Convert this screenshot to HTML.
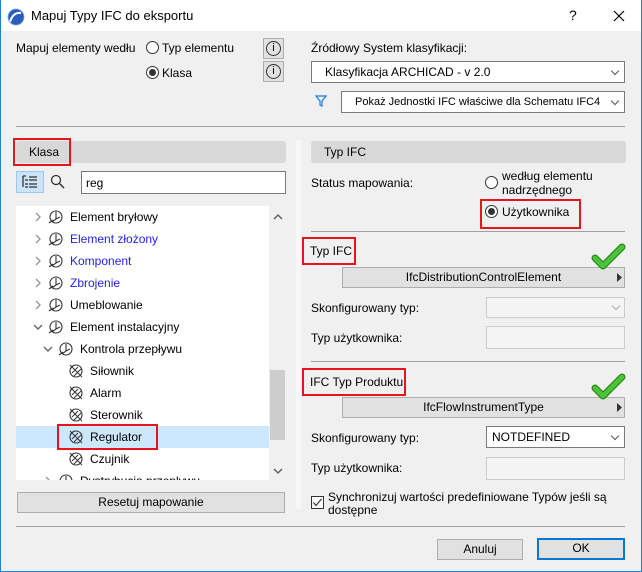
<!DOCTYPE html>
<html><head><meta charset="utf-8"><style>
*{box-sizing:border-box;margin:0;padding:0}
body{width:642px;height:572px;overflow:hidden;background:#f0f0f0;font-family:"Liberation Sans",sans-serif;font-size:12px;color:#000;position:relative}
.a{position:absolute;white-space:nowrap}
.t{position:absolute;white-space:nowrap;line-height:14px}
.win{position:absolute;left:0;top:0;width:642px;height:572px;border:1px solid #1883d7;border-top:none}
.title{position:absolute;left:0;top:0;width:642px;height:31px;background:#fff;border-left:1px solid #1883d7;border-right:1px solid #1883d7}
.radio{position:absolute;width:13px;height:13px;border:1px solid #333;border-radius:50%;background:#fff}
.radio.on::after{content:"";position:absolute;left:2px;top:2px;width:7px;height:7px;border-radius:50%;background:#333}
.info{position:absolute;width:21px;height:21px;border:1px solid #adadad;background:#e1e1e1}
.info::after{content:"";position:absolute;left:2px;top:2px;width:15px;height:15px;border:1.3px solid #333;border-radius:50%;box-sizing:border-box}
.info span{position:absolute;left:0;width:19px;top:3px;text-align:center;font-size:11px;line-height:13px}
.dd{position:absolute;background:#fff;border:1px solid #7a7a7a;height:22px}
.dd .v{position:absolute;right:6px;top:6px;width:6px;height:6px;border-right:1px solid #555;border-bottom:1px solid #555;transform:rotate(45deg)}
.line{position:absolute;height:1px;background:#a0a0a0}
.hdr{position:absolute;background:#d8d8d8;border-radius:3px;height:22px}
.red{position:absolute;border:2px solid #e8141c}
.btn{position:absolute;background:#e1e1e1;border:1px solid #adadad;text-align:center;line-height:19px}
.inp{position:absolute;background:#f4f4f4;border:1px solid #ccc}
.blue{color:#1f1ff0}
</style></head><body>
<div class="title"></div>
<div class="win"></div>
<svg class="a" style="left:7px;top:8px" width="18" height="18" viewBox="0 0 18 18"><circle cx="9" cy="9" r="8" fill="#2a5fb8"/><path d="M3 14 Q6 4 14 5" stroke="#fff" stroke-width="2" fill="none"/><circle cx="9" cy="9" r="8" fill="none" stroke="#7fa6e0" stroke-width="0.8"/></svg>
<div class="t" style="left:31px;top:9px;font-size:13px;color:#000">Mapuj Typy IFC do eksportu</div>
<div class="t" style="left:569px;top:8px;font-size:14px">?</div>
<svg class="a" style="left:613px;top:10px" width="12" height="12"><path d="M1 1L11 11M11 1L1 11" stroke="#000" stroke-width="1.2"/></svg>

<div class="t" style="left:16px;top:41px">Mapuj elementy według</div>
<div class="a" style="left:136px;top:38px;width:8px;height:20px;background:#f0f0f0"></div>
<div class="radio" style="left:146px;top:41px"></div>
<div class="t" style="left:162px;top:41px">Typ elementu</div>
<div class="radio on" style="left:146px;top:66px"></div>
<div class="t" style="left:162px;top:66px">Klasa</div>
<div class="info" style="left:263px;top:38px"><span>i</span></div>
<div class="info" style="left:263px;top:61px"><span>i</span></div>

<div class="t" style="left:311px;top:41px">Źródłowy System klasyfikacji:</div>
<div class="dd" style="left:311px;top:61px;width:314px"><div class="t" style="left:13px;top:3px">Klasyfikacja ARCHICAD - v 2.0</div><div class="v"></div></div>
<svg class="a" style="left:315px;top:95px" width="12" height="12"><path d="M1 1H11L7 6V11L5 10V6Z" fill="none" stroke="#1e7ae0" stroke-width="1.2"/></svg>
<div class="dd" style="left:341px;top:91px;width:284px"><div class="t" style="left:13px;top:3px;font-size:11px">Pokaż Jednostki IFC właściwe dla Schematu IFC4</div><div class="v"></div></div>
<div class="line" style="left:16px;top:126px;width:609px"></div>

<!-- left -->
<div class="hdr" style="left:16px;top:141px;width:270px"></div>
<div class="t" style="left:29px;top:145px">Klasa</div>
<div class="red" style="left:13px;top:138px;width:58px;height:28px"></div>
<div class="a" style="left:16px;top:171px;width:28px;height:22px;background:#cce4f7;border:1px solid #99c9ef"></div>
<svg class="a" style="left:22px;top:175px" width="16" height="14"><path d="M1 1h3M1 1v11M3 5h3M3 9h3M3 12h3M7 2h8M7 5h8M7 9h8M7 12h8" stroke="#333" stroke-width="1.3" fill="none"/></svg>
<svg class="a" style="left:50px;top:174px" width="16" height="16"><circle cx="6" cy="6" r="4.5" fill="none" stroke="#333" stroke-width="1.3"/><path d="M9.5 9.5L14 14" stroke="#333" stroke-width="1.5"/></svg>
<div class="a" style="left:81px;top:171px;width:205px;height:23px;background:#fff;border:1px solid #7a7a7a"></div>
<div class="t" style="left:86px;top:176px">reg</div>

<div class="a" style="left:16px;top:206px;width:270px;height:274px;background:#fff;overflow:hidden">
<div class="a" style="left:253px;top:0;width:17px;height:274px;background:#f0f0f0"></div>
<div class="a" style="left:254px;top:164px;width:15px;height:70px;background:#cdcdcd"></div>
<svg class="a" style="left:257px;top:7px" width="10" height="7"><path d="M1 6L5 2L9 6" stroke="#555" fill="none" stroke-width="1.3"/></svg>
<svg class="a" style="left:257px;top:262px" width="10" height="7"><path d="M1 1L5 5L9 1" stroke="#555" fill="none" stroke-width="1.3"/></svg>
<div class="a" style="left:0;top:220px;width:253px;height:22px;background:#cce8ff"></div>
</div>
<svg class="a" style="left:16px;top:206px;overflow:hidden" width="253" height="274">
<defs>
<g id="ic1"><circle cx="7" cy="7" r="6" fill="none" stroke="#333" stroke-width="1.1"/><path d="M7 2V9L3 12M7 9L11 7M0 13L4 10" stroke="#333" stroke-width="1.1" fill="none"/></g>
<g id="ic2"><circle cx="7" cy="7" r="6" fill="none" stroke="#333" stroke-width="1.1"/><path d="M1 1L13 13M3 9L9 3M5 12L12 5M1 5L5 1" stroke="#333" stroke-width="1" fill="none"/></g>
<path id="cr" d="M0 0L4 4L0 8" stroke="#999" stroke-width="1.4" fill="none"/>
<path id="cd" d="M0 0L4 4L8 0" stroke="#666" stroke-width="1.4" fill="none"/>
</defs>
<use href="#cr" x="20" y="7"/><use href="#ic1" x="33" y="4"/>
<use href="#cr" x="20" y="29"/><use href="#ic1" x="33" y="26"/>
<use href="#cr" x="20" y="51"/><use href="#ic1" x="33" y="48"/>
<use href="#cr" x="20" y="73"/><use href="#ic1" x="33" y="70"/>
<use href="#cr" x="20" y="95"/><use href="#ic1" x="33" y="92"/>
<use href="#cd" x="18" y="119"/><use href="#ic1" x="33" y="114"/>
<use href="#cd" x="28" y="141"/><use href="#ic1" x="43" y="136"/>
<use href="#ic2" x="53" y="158"/>
<use href="#ic2" x="53" y="180"/>
<use href="#ic2" x="53" y="202"/>
<use href="#ic2" x="53" y="224"/>
<use href="#ic2" x="53" y="246"/>
<use href="#cr" x="30" y="271"/><use href="#ic1" x="43" y="268"/>
</svg>
<div class="a" style="left:16px;top:206px;width:253px;height:274px;overflow:hidden;font-size:12px">
<div class="t" style="left:54px;top:4px">Element bryłowy</div>
<div class="t blue" style="left:54px;top:26px">Element złożony</div>
<div class="t blue" style="left:54px;top:48px">Komponent</div>
<div class="t blue" style="left:54px;top:70px">Zbrojenie</div>
<div class="t" style="left:54px;top:92px">Umeblowanie</div>
<div class="t" style="left:54px;top:114px">Element instalacyjny</div>
<div class="t" style="left:64px;top:136px">Kontrola przepływu</div>
<div class="t" style="left:74px;top:158px">Siłownik</div>
<div class="t" style="left:74px;top:180px">Alarm</div>
<div class="t" style="left:74px;top:202px">Sterownik</div>
<div class="t" style="left:74px;top:224px">Regulator</div>
<div class="t" style="left:74px;top:246px">Czujnik</div>
<div class="t" style="left:64px;top:268px">Dystrybucja przepływu</div>
</div>
<div class="red" style="left:57px;top:424px;width:101px;height:26px"></div>
<div class="btn" style="left:17px;top:492px;width:268px;height:21px">Resetuj mapowanie</div>
<div class="a" style="left:296px;top:140px;width:5px;height:369px;background:#f7f7f7"></div>

<!-- right -->
<div class="hdr" style="left:311px;top:141px;width:315px"></div>
<div class="t" style="left:324px;top:145px">Typ IFC</div>
<div class="t" style="left:311px;top:176px">Status mapowania:</div>
<div class="radio" style="left:485px;top:176px"></div>
<div class="t" style="left:502px;top:169px">według elementu</div>
<div class="t" style="left:502px;top:183px">nadrzędnego</div>
<div class="radio on" style="left:485px;top:205px"></div>
<div class="t" style="left:502px;top:205px">Użytkownika</div>
<div class="red" style="left:480px;top:199px;width:101px;height:30px"></div>
<div class="line" style="left:311px;top:231px;width:314px"></div>

<div class="t" style="left:310px;top:244px">Typ IFC</div>
<div class="red" style="left:302px;top:237px;width:54px;height:28px"></div>
<div class="btn" style="left:342px;top:267px;width:283px;height:21px">IfcDistributionControlElement</div>
<svg class="a" style="left:617px;top:273px" width="6" height="9"><path d="M0 0L5 4.5L0 9Z" fill="#333"/></svg>
<svg class="a" style="left:590px;top:242px" width="38" height="32"><path d="M5 16L13 24L32 5" stroke="#2c8a1c" stroke-width="7" fill="none" stroke-linejoin="round" stroke-linecap="round"/><path d="M5 16L13 24L32 5" stroke="#4cc43a" stroke-width="4.5" fill="none" stroke-linejoin="round" stroke-linecap="round"/></svg>
<div class="t" style="left:311px;top:301px">Skonfigurowany typ:</div>
<div class="inp" style="left:486px;top:297px;width:139px;height:21px"><div class="a" style="right:5px;top:5px;width:6px;height:6px;border-right:1px solid #aaa;border-bottom:1px solid #aaa;transform:rotate(45deg)"></div></div>
<div class="t" style="left:311px;top:331px">Typ użytkownika:</div>
<div class="inp" style="left:486px;top:326px;width:139px;height:23px"></div>
<div class="line" style="left:311px;top:361px;width:314px"></div>

<div class="t" style="left:310px;top:375px">IFC Typ Produktu</div>
<div class="red" style="left:302px;top:368px;width:104px;height:28px"></div>
<div class="btn" style="left:342px;top:397px;width:283px;height:21px">IfcFlowInstrumentType</div>
<svg class="a" style="left:617px;top:403px" width="6" height="9"><path d="M0 0L5 4.5L0 9Z" fill="#333"/></svg>
<svg class="a" style="left:590px;top:372px" width="38" height="32"><path d="M5 16L13 24L32 5" stroke="#2c8a1c" stroke-width="7" fill="none" stroke-linejoin="round" stroke-linecap="round"/><path d="M5 16L13 24L32 5" stroke="#4cc43a" stroke-width="4.5" fill="none" stroke-linejoin="round" stroke-linecap="round"/></svg>
<div class="t" style="left:311px;top:431px">Skonfigurowany typ:</div>
<div class="dd" style="left:486px;top:426px;width:139px"><div class="t" style="left:5px;top:3px">NOTDEFINED</div><div class="v"></div></div>
<div class="t" style="left:311px;top:461px">Typ użytkownika:</div>
<div class="inp" style="left:486px;top:457px;width:139px;height:23px"></div>
<div class="a" style="left:311px;top:496px;width:13px;height:13px;border:1px solid #333;background:#fff"></div>
<svg class="a" style="left:312px;top:497px" width="11" height="11"><path d="M1.5 5.5L4 8.5L9.5 2" stroke="#333" stroke-width="1.2" fill="none"/></svg>
<div class="t" style="left:328px;top:490px">Synchronizuj wartości predefiniowane Typów jeśli są</div>
<div class="t" style="left:328px;top:503px">dostępne</div>
<div class="line" style="left:16px;top:526px;width:609px"></div>
<div class="btn" style="left:437px;top:539px;width:86px;height:21px">Anuluj</div>
<div class="btn" style="left:537px;top:538px;width:88px;height:22px;border:2px solid #0078d7;line-height:17px">OK</div>
</body></html>
